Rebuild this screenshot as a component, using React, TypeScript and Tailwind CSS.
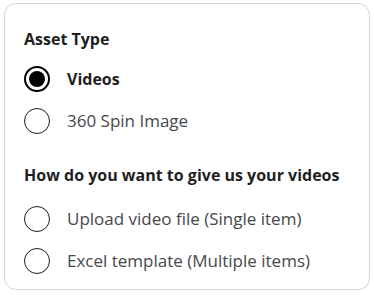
import { useState } from 'react';

function Radio({ checked }: { checked: boolean }) {
  return (
    <span
      className={
        checked
          ? 'flex h-[26px] w-[26px] shrink-0 items-center justify-center rounded-full border-[2.5px] border-black bg-white'
          : 'flex h-[26px] w-[26px] shrink-0 items-center justify-center rounded-full border-[1.5px] border-[#1a1a1a] bg-white'
      }
    >
      {checked && <span className="h-[16px] w-[16px] rounded-full bg-black" />}
    </span>
  );
}

interface OptionProps {
  label: string;
  checked: boolean;
  onSelect: () => void;
}

function Option({ label, checked, onSelect }: OptionProps) {
  return (
    <button type="button" onClick={onSelect} className="flex items-center gap-[17px] text-left">
      <Radio checked={checked} />
      <span className={checked ? 'text-[16px] font-bold text-[#1f1f1f]' : 'text-[17px] text-[#46474a]'}>
        {label}
      </span>
    </button>
  );
}

export default function App() {
  const [assetType, setAssetType] = useState('videos');
  const [method, setMethod] = useState('');

  return (
    <div className="h-[295px] w-[374px] bg-white pl-[4px] pr-[4px] pt-[3px] font-['Open_Sans',sans-serif]">
      <div className="h-[287px] rounded-[12px] border border-[#cbd6e2] px-[19px] pt-[25px]">
        {/* Asset type */}
        <h2 className="text-[16px] font-bold leading-[20px] text-[#1f1f1f]">Asset Type</h2>
        <div className="mt-[17px] flex flex-col gap-[16px]">
          <Option label="Videos" checked={assetType === 'videos'} onSelect={() => setAssetType('videos')} />
          <Option label="360 Spin Image" checked={assetType === 'spin'} onSelect={() => setAssetType('spin')} />
        </div>

        {/* Delivery method */}
        <h2 className="mt-[31px] text-[16px] font-bold leading-[20px] text-[#1f1f1f]">
          How do you want to give us your videos
        </h2>
        <div className="mt-[21px] flex flex-col gap-[16px]">
          <Option label="Upload video file (Single item)" checked={method === 'upload'} onSelect={() => setMethod('upload')} />
          <Option label="Excel template (Multiple items)" checked={method === 'excel'} onSelect={() => setMethod('excel')} />
        </div>
      </div>
    </div>
  );
}
